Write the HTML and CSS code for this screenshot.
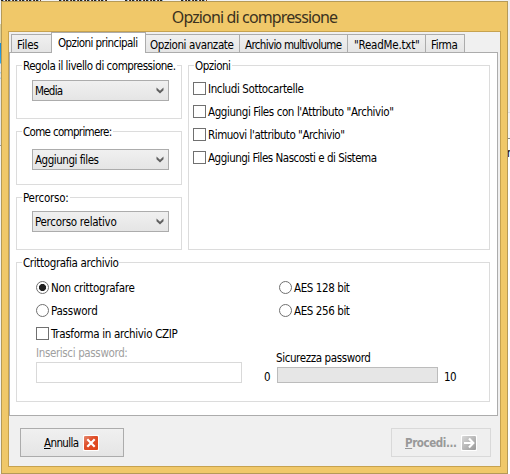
FILE: index.html
```
<!DOCTYPE html>
<html lang="it">
<head>
<meta charset="utf-8">
<title>Opzioni di compressione</title>
<link rel="stylesheet" href="styles.css">
</head>
<body>
<div class="backdrop"><i class="b1"></i><i class="b2"></i><i class="b3"></i><i class="b4"></i><span class="b5">n</span><span class="b6">c</span></div>
<main class="window">
  <h1 class="title"><span style="--w:165">Opzioni di compressione</span></h1>
  <div class="client">
    <nav class="tabs">
      <div class="tab t1"><span style="--w:21">Files</span></div>
      <div class="tab t2 active"><span style="--w:79">Opzioni principali</span></div>
      <div class="tab t3"><span style="--w:83">Opzioni avanzate</span></div>
      <div class="tab t4"><span style="--w:96">Archivio multivolume</span></div>
      <div class="tab t5"><span style="--w:65">"ReadMe.txt"</span></div>
      <div class="tab t6"><span style="--w:26">Firma</span></div>
    </nav>
    <section class="pane">
      <div class="upper">
        <div class="left">
          <div class="group"><span class="legend" style="--w:152">Regola il livello di compressione.</span><div class="select s1"><span style="--w:27">Media</span><svg class="chev" viewBox="0 0 8 7"><path d="M.5.6v2.6L4 6.6l3.5-3.4V.6L4 3.8z"/></svg></div></div>
          <div class="group"><span class="legend" style="--w:88">Come comprimere:</span><div class="select s2"><span style="--w:63">Aggiungi files</span><svg class="chev" viewBox="0 0 8 7"><path d="M.5.6v2.6L4 6.6l3.5-3.4V.6L4 3.8z"/></svg></div></div>
          <div class="group last"><span class="legend" style="--w:45">Percorso:</span><div class="select s3"><span style="--w:81">Percorso relativo</span><svg class="chev" viewBox="0 0 8 7"><path d="M.5.6v2.6L4 6.6l3.5-3.4V.6L4 3.8z"/></svg></div></div>
        </div>
        <div class="group options"><span class="legend" style="--w:35">Opzioni</span>
          <div class="item"><i class="box"></i><span style="--w:95">Includi Sottocartelle</span></div>
          <div class="item"><i class="box"></i><span style="--w:185">Aggiungi Files con l'Attributo "Archivio"</span></div>
          <div class="item"><i class="box"></i><span style="--w:136">Rimuovi l'attributo "Archivio"</span></div>
          <div class="item"><i class="box"></i><span style="--w:168">Aggiungi Files Nascosti e di Sistema</span></div>
        </div>
      </div>
      <div class="group crypt"><span class="legend" style="--w:95">Crittografia archivio</span>
        <div class="col1">
          <div class="item"><i class="radio on"></i><span style="--w:83">Non crittografare</span></div>
          <div class="item"><i class="radio"></i><span style="--w:46">Password</span></div>
          <div class="item"><i class="box"></i><span style="--w:126">Trasforma in archivio CZIP</span></div>
          <div class="hint"><span style="--w:91">Inserisci password:</span></div>
          <div class="input"></div>
        </div>
        <div class="col2">
          <div class="item"><i class="radio"></i><span style="--w:55">AES 128 bit</span></div>
          <div class="item"><i class="radio"></i><span style="--w:55">AES 256 bit</span></div>
          <div class="sec"><span style="--w:94">Sicurezza password</span></div>
          <div class="meter"><span class="zero">0</span><div class="bar"></div><span class="ten">10</span></div>
        </div>
      </div>
    </section>
    <footer class="actions">
      <div class="button cancel"><span style="--w:34"><u>A</u>nnulla</span>
        <svg class="icon" viewBox="0 0 16 16"><defs><linearGradient id="r" x1="0" y1="0" x2="1" y2="1"><stop offset="0" stop-color="#e58a70"/><stop offset=".4" stop-color="#df4f2a"/><stop offset="1" stop-color="#e04416"/></linearGradient></defs><rect width="16" height="16" rx="1" fill="#fff"/><rect x="1" y="1" width="14" height="14" rx="1" fill="url(#r)"/><path d="M4.3 4.3l7.4 7.4m0-7.4l-7.4 7.4" stroke="#fff" stroke-width="2.2"/></svg></div>
      <div class="button next"><span style="--w:51"><u>P</u>rocedi...</span>
        <svg class="icon" viewBox="0 0 16 16"><defs><linearGradient id="g" x1="0" y1="0" x2="1" y2="1"><stop offset="0" stop-color="#d8d8d8"/><stop offset="1" stop-color="#999"/></linearGradient></defs><rect width="16" height="16" rx="1" fill="#fff"/><rect x="1" y="1" width="14" height="14" rx="1" fill="url(#g)"/><path d="M3 8h9M8 3.5L12.3 8 8 12.5" fill="none" stroke="#fff" stroke-width="2.2"/></svg></div>
    </footer>
  </div>
</main>
<script src="fit.js"></script>
</body>
</html>
```
FILE: fit.js
```
// Spread each label over its nominal width through letter spacing.
document.querySelectorAll('[style*="--w"]').forEach(function (el) {
  var target = parseFloat(el.style.getPropertyValue('--w'));
  var range = document.createRange();
  range.selectNodeContents(el);
  var actual = range.getBoundingClientRect().width;
  el.style.letterSpacing = (target + 0.5 - actual) / el.textContent.length + 'px';
});
```
FILE: styles.css
```
* { box-sizing: border-box; }
body { margin: 0; width: 510px; height: 474px; overflow: hidden; background: #f0f0f0; font: 11.5px/14px "DejaVu Sans Condensed", "DejaVu Sans", sans-serif; font-stretch: condensed; color: #000; padding: 1px; }
span { white-space: nowrap; }
.backdrop { position: absolute; inset: 0; overflow: hidden; background: linear-gradient(90deg, #f2f2f2 508px, transparent 508px), linear-gradient(#efefef 112px, #ddd 112px, #ddd 113px, #f5f5f5 113px, #f5f5f5 138px, #888 138px, #888 139px, #fff 139px); }
.backdrop::before { content: ""; position: absolute; left: 0; top: 24px; width: 1px; height: 122px; background: linear-gradient(#d9cf9c 19px, #1689d3 19px, #35a8e8 39px, #e6e6e6 40px, #e6e6e6 121px, #999 121px); }
.backdrop span { position: absolute; }
.backdrop i { position: absolute; top: 0; height: 1px; background: repeating-linear-gradient(90deg, #222 0 2px, #8bb4d8 2px 3px, #eee 3px 4px, #6b3a22 4px 5px, #222 5px 6px, #ddd 6px 7px); }
.backdrop .b1 { left: 1px; width: 40px; } .backdrop .b2 { left: 59px; width: 48px; } .backdrop .b3 { left: 125px; width: 38px; } .backdrop .b4 { left: 181px; width: 26px; }
.backdrop .b5 { left: 507px; top: 146px; } .backdrop .b6 { left: -5px; top: 68px; }
.window { position: relative; width: 507px; height: 473px; border: 1px solid #b59a58; background: #f0c869; padding: 0 6px; }
.title { margin: 0; height: 29px; font-family: "Noto Sans", sans-serif; font-size: 16px; font-weight: 400; line-height: 30px; text-align: center; color: #3b3220; }
.client { width: 493px; height: 436px; border: 1px solid #c6a24f; background: #f0f0f0; }
.tabs { display: flex; align-items: flex-end; height: 20px; padding-left: 2px; }
.tab { height: 18px; border: 1px solid #acacac; border-bottom: 0; border-right: 0; background: linear-gradient(#f0f0f0, #e5e5e5); padding: 3px 0 0 5px; }
.tab.active { height: 21px; margin-bottom: -1px; background: #fff; border-right: 1px solid #acacac; position: relative; padding-left: 6px; }
.t1 { width: 40px; } .t2 { width: 95px; } .t3 { width: 93px; border-left: 0; padding-left: 4px; } .t4 { width: 108px; } .t5 { width: 78px; padding-left: 6px; } .t6 { width: 40px; border-right: 1px solid #acacac; }
.pane { width: 489px; height: 364px; border: 1px solid #acacac; background: #fff; padding: 12px 0 0 6px; }
.upper { display: flex; gap: 6px; }
.group { width: 166px; height: 54px; border: 1px solid #dcdcdc; margin-bottom: 12px; padding: 14px 0 0 15px; position: relative; }
.group.last { height: 53px; margin-bottom: 0; padding-top: 13px; }
.legend { position: absolute; left: 5px; top: -7px; background: #fff; padding: 0 1px; line-height: 15px; }
.select { width: 137px; height: 21px; border: 1px solid #acacac; background: linear-gradient(#f0f0f0, #e5e5e5); display: flex; justify-content: space-between; align-items: center; padding: 0 4px 0 2px; }
.select span { padding-top: 1px; }
.s2 { margin-top: 3px; }
.chev { width: 8px; height: 7px; fill: #606060; }
.options { width: 302px; height: 185px; margin: 0; padding: 16px 0 0 4px; }
.item { display: flex; height: 23px; gap: 2px; line-height: 15px; }
.box { width: 13px; height: 13px; border: 1px solid #707070; background: #fff; flex: none; }
.radio { width: 13px; height: 13px; border: 1px solid #707070; border-radius: 50%; background: #fff; flex: none; }
.radio.on { background: radial-gradient(circle, #222 3.2px, #fff 3.9px); }
.crypt { width: 474px; height: 140px; margin: 12px 0 0; padding: 18px 0 0 19px; display: flex; }
.col1 { width: 243px; }
.hint { color: #a0a0a0; margin-top: -4px; height: 16px; line-height: 15px; }
.input { width: 206px; height: 21px; border: 1px solid #d9d9d9; }
.sec { margin: 24px 0 0 -3px; height: 16px; line-height: 15px; }
.meter { display: flex; align-items: center; margin-left: -15px; height: 16px; }
.zero { width: 13px; } .ten { margin-left: 6px; }
.meter span { padding-top: 3px; letter-spacing: -.7px; }
.bar { width: 161px; height: 16px; border: 1px solid #bcbcbc; background: #e6e6e6; }
.actions { display: flex; justify-content: space-between; padding: 12px 9px 0 11px; }
.button { height: 29px; border: 1px solid #acacac; background: linear-gradient(#f0f0f0, #e5e5e5); display: flex; align-items: center; }
.button span { padding-top: 1px; }
.icon { width: 16px; height: 16px; }
.cancel { width: 104px; padding-left: 23px; gap: 4px; }
.next { width: 100px; border-color: #d9d9d9; background: #efefef; color: #999; font-weight: 700; padding-left: 13px; gap: 4px; }
```
